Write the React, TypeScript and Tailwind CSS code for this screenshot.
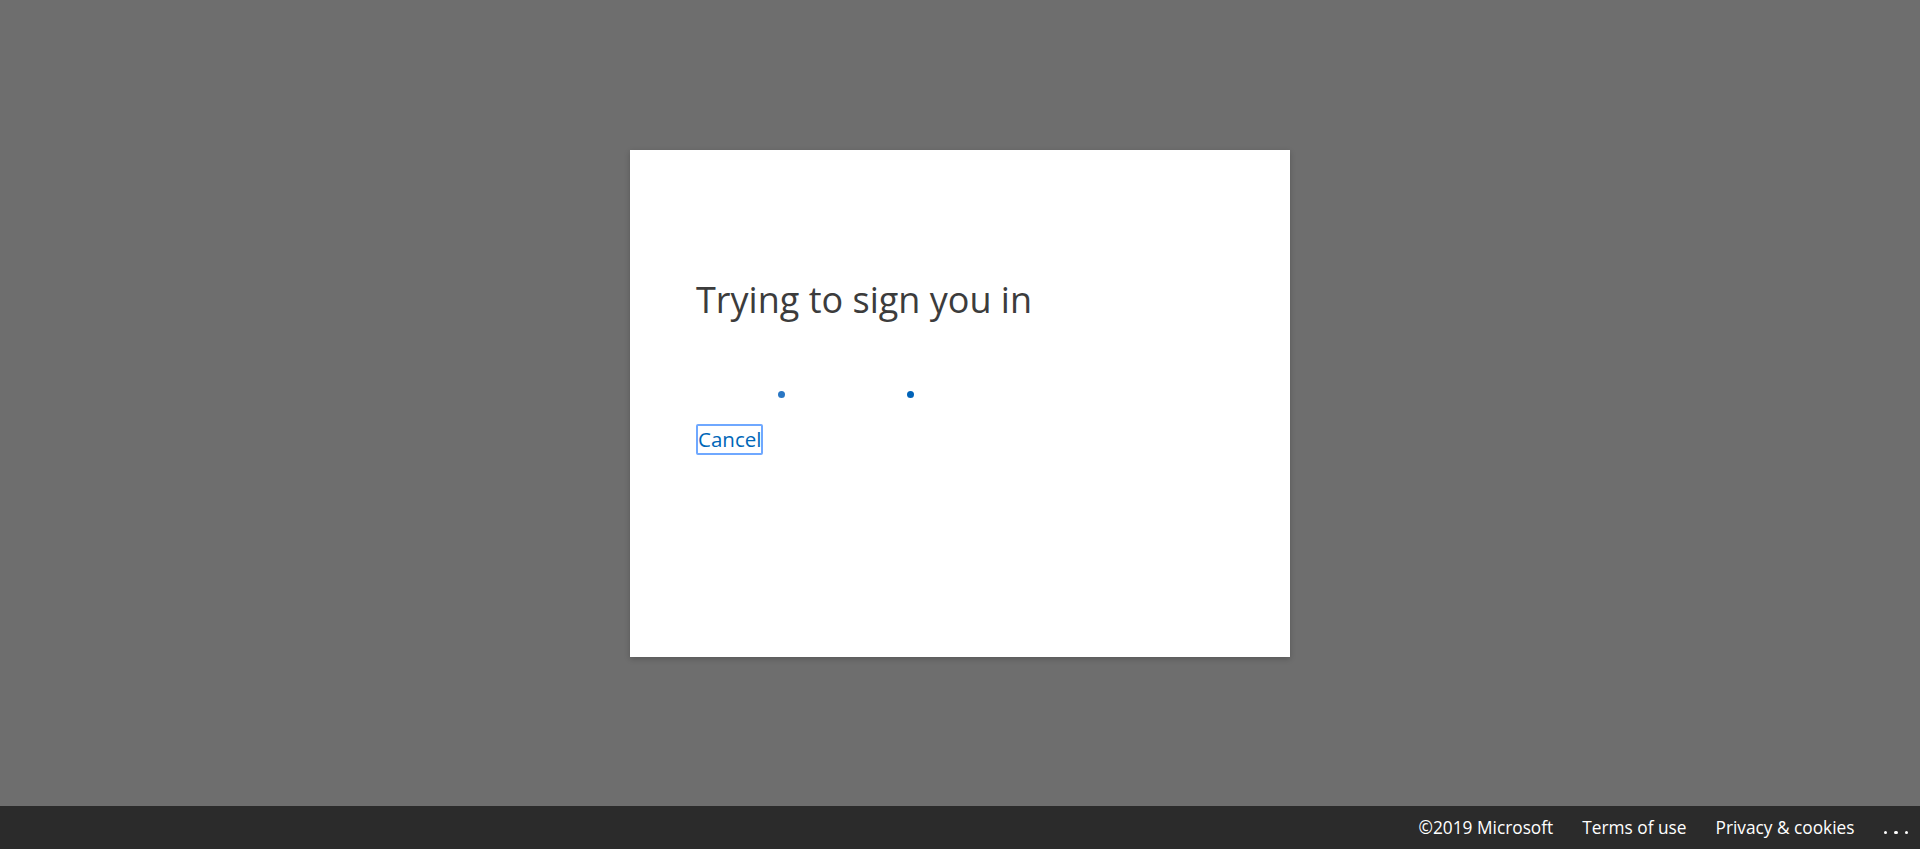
export default function App() {
  const font = { fontFamily: '"Open Sans", "Noto Sans", sans-serif' };
  return (
    <div className="flex h-[849px] w-full flex-col bg-[#6e6e6e]" style={font}>
      <div className="flex flex-1 items-center justify-center">
        <div className="h-[507px] w-[660px] bg-white px-[66px] pt-[124px] shadow-[0_2px_6px_rgba(0,0,0,0.2)]">
          <h1 className="text-[36px] leading-[52px] text-[#3c3c3c]">Trying to sign you in</h1>
          <div className="relative mt-[65px] h-[8px] w-full">
            <span className="absolute left-[82px] top-0 h-[7px] w-[7px] rounded-full bg-[#2a77c4]" />
            <span className="absolute left-[211px] top-0 h-[7px] w-[7px] rounded-full bg-[#0063b8]" />
          </div>
          <div className="mt-[25px]">
            <a
              href="#"
              className="inline-block rounded-[2px] border-2 border-[#6fa8ff] text-[20.5px] leading-[27px] text-[#0067b8]"
            >
              Cancel
            </a>
          </div>
        </div>
      </div>
      <footer className="flex h-[43px] items-center justify-end gap-[29px] bg-[#2b2b2b] pr-[12px] text-[17.3px] text-white">
        <span>©2019 Microsoft</span>
        <a href="#">Terms of use</a>
        <a href="#">Privacy &amp; cookies</a>
        <a href="#" className="flex items-center gap-[7px] pt-[10px]">
          <span className="h-[3.5px] w-[3.5px] rounded-full bg-white" />
          <span className="h-[3.5px] w-[3.5px] rounded-full bg-white" />
          <span className="h-[3.5px] w-[3.5px] rounded-full bg-white" />
        </a>
      </footer>
    </div>
  );
}
